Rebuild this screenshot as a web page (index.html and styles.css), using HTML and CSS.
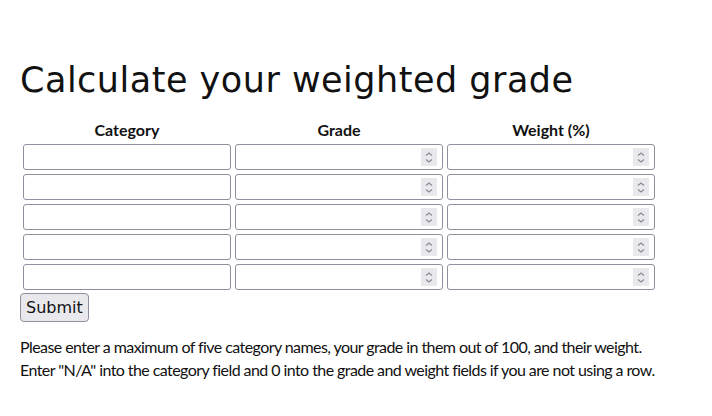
FILE: index.html
```html
<!DOCTYPE html>
<html>
<head>
<meta charset="utf-8">
<link rel="stylesheet" href="styles.css">
</head>
<body>
<main class="page">
  <h1 class="title">Calculate your weighted grade</h1>
  <form class="calc">
    <table class="grid">
      <thead>
        <tr><th>Category</th><th>Grade</th><th>Weight (%)</th></tr>
      </thead>
      <tbody>
        <tr><td><input class="field" type="text"></td><td><div class="num"><input class="field" type="number"><span class="spin"><svg viewBox="0 0 16 16" width="16" height="16"><path d="M5 6.5 8 4l3 2.5M5 10.5 8 13l3-2.5" fill="none" stroke="#8a8a94" stroke-width="1.2"/></svg></span></div></td><td><div class="num"><input class="field" type="number"><span class="spin"><svg viewBox="0 0 16 16" width="16" height="16"><path d="M5 6.5 8 4l3 2.5M5 10.5 8 13l3-2.5" fill="none" stroke="#8a8a94" stroke-width="1.2"/></svg></span></div></td></tr>
        <tr><td><input class="field" type="text"></td><td><div class="num"><input class="field" type="number"><span class="spin"><svg viewBox="0 0 16 16" width="16" height="16"><path d="M5 6.5 8 4l3 2.5M5 10.5 8 13l3-2.5" fill="none" stroke="#8a8a94" stroke-width="1.2"/></svg></span></div></td><td><div class="num"><input class="field" type="number"><span class="spin"><svg viewBox="0 0 16 16" width="16" height="16"><path d="M5 6.5 8 4l3 2.5M5 10.5 8 13l3-2.5" fill="none" stroke="#8a8a94" stroke-width="1.2"/></svg></span></div></td></tr>
        <tr><td><input class="field" type="text"></td><td><div class="num"><input class="field" type="number"><span class="spin"><svg viewBox="0 0 16 16" width="16" height="16"><path d="M5 6.5 8 4l3 2.5M5 10.5 8 13l3-2.5" fill="none" stroke="#8a8a94" stroke-width="1.2"/></svg></span></div></td><td><div class="num"><input class="field" type="number"><span class="spin"><svg viewBox="0 0 16 16" width="16" height="16"><path d="M5 6.5 8 4l3 2.5M5 10.5 8 13l3-2.5" fill="none" stroke="#8a8a94" stroke-width="1.2"/></svg></span></div></td></tr>
        <tr><td><input class="field" type="text"></td><td><div class="num"><input class="field" type="number"><span class="spin"><svg viewBox="0 0 16 16" width="16" height="16"><path d="M5 6.5 8 4l3 2.5M5 10.5 8 13l3-2.5" fill="none" stroke="#8a8a94" stroke-width="1.2"/></svg></span></div></td><td><div class="num"><input class="field" type="number"><span class="spin"><svg viewBox="0 0 16 16" width="16" height="16"><path d="M5 6.5 8 4l3 2.5M5 10.5 8 13l3-2.5" fill="none" stroke="#8a8a94" stroke-width="1.2"/></svg></span></div></td></tr>
        <tr><td><input class="field" type="text"></td><td><div class="num"><input class="field" type="number"><span class="spin"><svg viewBox="0 0 16 16" width="16" height="16"><path d="M5 6.5 8 4l3 2.5M5 10.5 8 13l3-2.5" fill="none" stroke="#8a8a94" stroke-width="1.2"/></svg></span></div></td><td><div class="num"><input class="field" type="number"><span class="spin"><svg viewBox="0 0 16 16" width="16" height="16"><path d="M5 6.5 8 4l3 2.5M5 10.5 8 13l3-2.5" fill="none" stroke="#8a8a94" stroke-width="1.2"/></svg></span></div></td></tr>
      </tbody>
    </table>
    <button class="submit" type="button">Submit</button>
  </form>
  <p class="note">Please enter a maximum of five category names, your grade in them out of 100, and their weight.<br>Enter "N/A" into the category field and 0 into the grade and weight fields if you are not using a row.</p>
</main>
</body>
</html>
```

FILE: styles.css
```css
html, body {
  margin: 0;
  background: #fff;
  color: #111;
}
.page {
  padding: 58px 20px 0 20px;
}
.title {
  margin: 0 0 15px 0;
  font-family: "DejaVu Sans", sans-serif;
  font-weight: 400;
  font-size: 35px;
  line-height: 44px;
  letter-spacing: 0.5px;
}
.calc {
  margin: 0;
}
.grid {
  border-collapse: separate;
  border-spacing: 2px;
  margin-left: 0;
}
.grid th {
  font-family: Lato, sans-serif;
  font-weight: 700;
  font-size: 16px;
  line-height: 20px;
  padding: 1px;
  text-align: center;
}
.grid td {
  padding: 1px;
}
.num {
  position: relative;
}
.field {
  display: block;
  box-sizing: border-box;
  width: 208px;
  height: 26px;
  margin: 0;
  border: 1px solid #8f8f9d;
  border-radius: 3px;
  background: #fff;
  font-family: Lato, sans-serif;
  font-size: 14px;
  padding: 2px 4px;
  -moz-appearance: textfield;
  appearance: textfield;
}
.field::-webkit-outer-spin-button,
.field::-webkit-inner-spin-button {
  -webkit-appearance: none;
  margin: 0;
}
.spin {
  position: absolute;
  right: 6px;
  top: 4px;
  width: 16px;
  height: 18px;
  background: #e9e9ed;
  display: flex;
  align-items: center;
  justify-content: center;
}
.submit {
  display: block;
  box-sizing: border-box;
  height: 29px;
  padding: 0 5px;
  margin: 0;
  border: 1px solid #8f8f9d;
  border-radius: 4px;
  background: #e9e9ed;
  color: #111;
  font-family: "DejaVu Sans", sans-serif;
  font-size: 16px;
}
.note {
  margin: 13px 0 0 0;
  font-family: Lato, sans-serif;
  font-size: 16px;
  line-height: 23px;
  letter-spacing: -0.57px;
}
```
